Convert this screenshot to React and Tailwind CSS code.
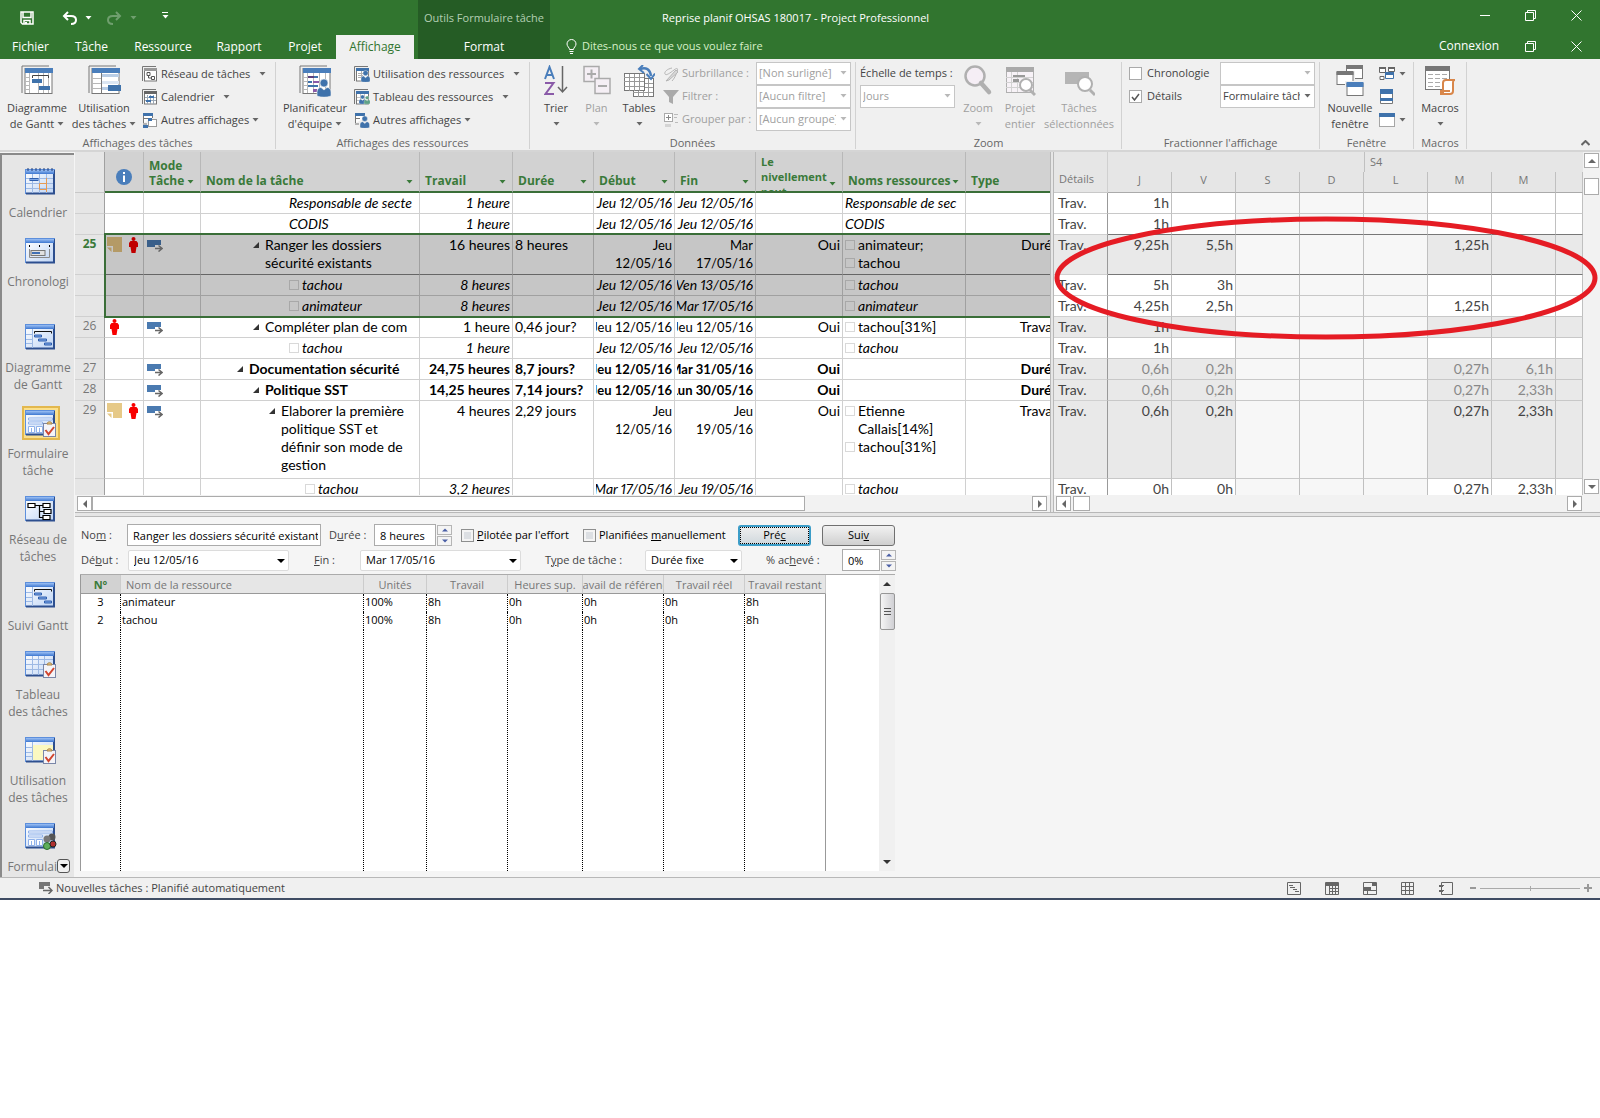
import React from 'react';

const ribbonFont = "font-['Open_Sans',sans-serif]";
const gridFont = "font-['Lato',sans-serif]";

// -------------------------
// Data
// -------------------------
const taskRows = [
  { h: 'h-[21px]', name: ['Responsable de secte'], indent: 'pl-[86px]', italic: true, work: '1 heure', start: ['Jeu 12/05/16'], end: ['Jeu 12/05/16'], res: [['Responsable de sec', false]] },
  { h: 'h-[21px]', name: ['CODIS'], indent: 'pl-[86px]', italic: true, work: '1 heure', start: ['Jeu 12/05/16'], end: ['Jeu 12/05/16'], res: [['CODIS', false]] },
  { h: 'h-[40px]', id: 25, note: true, person: true, mode: true, selected: true, name: ['Ranger les dossiers', 'sécurité existants'], indent: 'pl-[50px]', arrow: true, work: '16 heures', dur: '8 heures', start: ['Jeu', '12/05/16'], end: ['Mar', '17/05/16'], level: 'Oui', res: [['animateur;', true], ['tachou', true]], type: 'Durée' },
  { h: 'h-[21px]', selected: true, name: ['tachou'], indent: 'pl-[86px]', box: true, italic: true, work: '8 heures', start: ['Jeu 12/05/16'], end: ['Ven 13/05/16'], res: [['tachou', true]] },
  { h: 'h-[21px]', selected: true, name: ['animateur'], indent: 'pl-[86px]', box: true, italic: true, work: '8 heures', start: ['Jeu 12/05/16'], end: ['Mar 17/05/16'], res: [['animateur', true]] },
  { h: 'h-[21px]', id: 26, person: true, mode: true, name: ['Compléter plan de com'], indent: 'pl-[50px]', arrow: true, work: '1 heure', dur: '0,46 jour?', start: ['Jeu 12/05/16'], end: ['Jeu 12/05/16'], level: 'Oui', res: [['tachou[31%]', true]], type: 'Travail' },
  { h: 'h-[21px]', name: ['tachou'], indent: 'pl-[86px]', box: true, italic: true, work: '1 heure', start: ['Jeu 12/05/16'], end: ['Jeu 12/05/16'], res: [['tachou', true]] },
  { h: 'h-[21px]', id: 27, mode: true, bold: true, name: ['Documentation sécurité'], indent: 'pl-[34px]', arrow: true, work: '24,75 heures', dur: '8,7 jours?', start: ['Jeu 12/05/16'], end: ['Mar 31/05/16'], level: 'Oui', res: [], type: 'Durée' },
  { h: 'h-[21px]', id: 28, mode: true, bold: true, name: ['Politique SST'], indent: 'pl-[50px]', arrow: true, work: '14,25 heures', dur: '7,14 jours?', start: ['Jeu 12/05/16'], end: ['Lun 30/05/16'], level: 'Oui', res: [], type: 'Durée' },
  { h: 'h-[78px]', id: 29, note: true, person: true, mode: true, name: ['Elaborer la première', 'politique SST et', 'définir son mode de', 'gestion'], indent: 'pl-[66px]', arrow: true, work: '4 heures', dur: '2,29 jours', start: ['Jeu', '12/05/16'], end: ['Jeu', '19/05/16'], level: 'Oui', res: [['Etienne', true], ['Callais[14%]', 'cont'], ['tachou[31%]', true]], type: 'Travail' },
  { h: 'h-[21px]', name: ['tachou'], indent: 'pl-[102px]', box: true, italic: true, work: '3,2 heures', start: ['Mar 17/05/16'], end: ['Jeu 19/05/16'], res: [['tachou', true]] },
];

const usageRows = [
  { h: 'h-[21px]', v: ['1h', '', '', '', '', '', ''] },
  { h: 'h-[21px]', v: ['1h', '', '', '', '', '', ''], strong: true },
  { h: 'h-[40px]', v: ['9,25h', '5,5h', '', '', '', '1,25h', ''], shade: true, strong: true },
  { h: 'h-[21px]', v: ['5h', '3h', '', '', '', '', ''] },
  { h: 'h-[21px]', v: ['4,25h', '2,5h', '', '', '', '1,25h', ''] },
  { h: 'h-[21px]', v: ['1h', '', '', '', '', '', ''], shade: true },
  { h: 'h-[21px]', v: ['1h', '', '', '', '', '', ''] },
  { h: 'h-[21px]', v: ['0,6h', '0,2h', '', '', '', '0,27h', '6,1h'], shade: true, light: true },
  { h: 'h-[21px]', v: ['0,6h', '0,2h', '', '', '', '0,27h', '2,33h'], shade: true, light: true },
  { h: 'h-[78px]', v: ['0,6h', '0,2h', '', '', '', '0,27h', '2,33h'], shade: true },
  { h: 'h-[21px]', v: ['0h', '0h', '', '', '', '0,27h', '2,33h'] },
];

const views = [
  { label: ['Calendrier'], kind: 'calendar' },
  { label: ['Chronologi', '\u00a0'], kind: 'timeline' },
  { label: ['Diagramme', 'de Gantt'], kind: 'gantt' },
  { label: ['Formulaire', 'tâche'], kind: 'taskform', active: true },
  { label: ['Réseau de', 'tâches'], kind: 'network' },
  { label: ['Suivi Gantt'], kind: 'gantt' },
  { label: ['Tableau', 'des tâches'], kind: 'sheet' },
  { label: ['Utilisation', 'des tâches'], kind: 'usage' },
  { label: ['Formulaire'], kind: 'resform' },
];

const resources = [
  ['3', 'animateur', '100%', '8h', '0h', '0h', '0h', '8h'],
  ['2', 'tachou', '100%', '8h', '0h', '0h', '0h', '8h'],
];

// -------------------------
// Small drawings
// -------------------------
const Caret = ({ className = 'text-[#666]' }) => (
  <svg width="7" height="4" viewBox="0 0 7 4" className={`inline-block shrink-0 ${className}`} aria-hidden="true">
    <path d="M0.5 0h6L3.5 3.6z" fill="currentColor" />
  </svg>
);

const Tri = ({ dir, className = 'text-[#666]' }) => {
  const d = { up: 'M0 6h8L4 2z', down: 'M0 2h8L4 6z', left: 'M6 0v8L2 4z', right: 'M2 0v8l4-4z' }[dir];
  return (
    <svg width="8" height="8" viewBox="0 0 8 8" className={className} aria-hidden="true">
      <path d={d} fill="currentColor" />
    </svg>
  );
};

// stacked page outline shared by the big view buttons
const PageBack = ({ head = '#4a7ebb' }) => (
  <>
    <path d="M1 28V1h27" fill="none" stroke="#777" />
    <rect x="4" y="3.5" width="27" height="25" fill="#fff" stroke="#777" />
    <rect x="4" y="3" width="28" height="5" fill={head} />
  </>
);

const GanttBig = () => (
  <svg width="32" height="30" viewBox="0 0 32 30" aria-hidden="true">
    <PageBack />
    <path d="M8.5 8v20M17.5 8v20M22.5 8v20M27.5 8v20M4 12.5h4M4 16.5h4M4 20.5h4M4 24.5h4" stroke="#b8b8b8" />
    <path d="M11.500 13v-2.500h16V13" stroke="#444" fill="none" />
    <rect x="11" y="14" width="10" height="4" fill="#3f72ab" />
    <rect x="18" y="21" width="11" height="4" fill="#3f72ab" />
  </svg>
);

const UsageBig = () => (
  <svg width="33" height="30" viewBox="0 0 33 30" aria-hidden="true">
    <PageBack />
    <rect x="14" y="9" width="17" height="3" fill="#b9cde5" />
    <rect x="14" y="16" width="17" height="3" fill="#dbe6f3" />
    <path d="M13.500 8v20" stroke="#777" />
    <path d="M4 13.500h9M4 18.500h9M4 23.500h9" stroke="#b8b8b8" />
    <rect x="14" y="22" width="6" height="3" fill="#b9cde5" />
    <rect x="20" y="20" width="13" height="6" fill="#3f72ab" />
  </svg>
);

const Person = ({ x = 0, y = 0, s = 1, color = '#3f72ab' }) => (
  <g transform={`translate(${x} ${y}) scale(${s})`}>
    <circle cx="7" cy="4" r="4" fill={color} stroke="#f0f0f0" strokeWidth=".6" />
    <path d="M0 17v-4c0-3 2-4.500 4-4.500l3 2.500 3-2.500c2 0 4 1.500 4 4.500v4c-4 1.600-10 1.600-14 0z" fill={color} stroke="#f0f0f0" strokeWidth=".6" />
  </g>
);

const PlannerBig = () => (
  <svg width="33" height="32" viewBox="0 0 33 32" aria-hidden="true">
    <PageBack />
    <path d="M8.500 8v20M14.500 8v20M20.500 8v20M26.500 8v20M4 12.500h4M4 16.500h4M4 20.500h4M4 24.500h4" stroke="#b8b8b8" />
    <rect x="9" y="11" width="6" height="2" fill="#5b3f7d" />
    <rect x="15" y="11" width="4" height="2" fill="#3f72ab" />
    <rect x="9" y="16" width="4" height="2" fill="#3f72ab" />
    <rect x="14" y="16" width="6" height="2" fill="#8a5aa8" />
    <rect x="9" y="20" width="10" height="2" fill="#3f72ab" />
    <rect x="14" y="24" width="4" height="3" fill="#8a5aa8" />
    <Person x={18} y={14} />
  </svg>
);

const SmallView = ({ kind }) => {
  const head = kind === 'calendar' ? '#666' : kind === 'network' ? '#999' : '#3f72ab';
  if (kind === 'other' || kind === 'otherRes') {
    return (
      <svg width="16" height="16" viewBox="0 0 16 16" aria-hidden="true">
        <path d="M1.500 11V1.500h9V6" fill="#fff" stroke="#777" />
        <rect x="1" y="1" width="10" height="3" fill="#3f72ab" />
        <path d="M1 6.500h5M1 12h4" stroke="#777" />
        {kind === 'other' ? (
          <>
            <rect x="6.500" y="7.500" width="8" height="7" fill="#fff" stroke="#999" />
            <rect x="6" y="6" width="4" height="3" fill="#3f72ab" />
            <rect x="1" y="13" width="5" height="3" fill="#3f72ab" />
          </>
        ) : (
          <Person x={6} y={4} s={0.68} />
        )}
      </svg>
    );
  }
  return (
    <svg width="16" height="16" viewBox="0 0 16 16" aria-hidden="true">
      <path d="M.5 15V.5H14" fill="none" stroke="#777" />
      <rect x="2.500" y="3" width="12" height="12" fill="#fff" stroke="#777" />
      <rect x="2" y="2" width="13" height="3" fill={head} />
      {kind === 'network' && <path d="M5 6.500h3v3H5zM9.500 10.500h3v3h-3zM6.500 9.500v2.500h3" fill="none" stroke="#555" />}
      {kind === 'calendar' && (
        <>
          <path d="M3 8.500h11M3 11.500h11M5.500 6v9M8.500 6v9M11.500 6v9" stroke="#9aa7b5" />
          <rect x="7" y="7" width="5" height="2" fill="#3f72ab" />
          <rect x="4" y="11" width="5" height="2" fill="#3f72ab" />
        </>
      )}
      {kind === 'resUsage' && (
        <>
          <path d="M4 7.500h6M4 9.500h5M4 11.500h4M7.500 5v10" stroke="#b0b0b0" />
          <Person x={7} y={4.500} s={0.65} />
        </>
      )}
      {kind === 'resSheet' && (
        <>
          <path d="M3 8.500h11M3 11.500h11M6.500 5v10M10.500 5v10" stroke="#c4c4c4" />
          <Person x={5} y={6} s={0.5} />
          <Person x={10} y={7} s={0.45} color="#5fa287" />
        </>
      )}
    </svg>
  );
};

const SortIcon = () => (
  <svg width="24" height="32" viewBox="0 0 24 32" fill="none" aria-hidden="true">
    <path d="M1 14 5.500 2 10 14M2.500 10h6" stroke="#4a7ebb" strokeWidth="2" />
    <path d="M1 18h8.500L1.500 29H10" stroke="#8a5aa8" strokeWidth="2" />
    <path d="M18.500 1v26M14 22l4.500 5 4.500-5" stroke="#666" strokeWidth="1.500" />
  </svg>
);

const OutlineIcon = () => (
  <svg width="28" height="32" viewBox="0 0 28 32" fill="#f5eff5" stroke="#aaa" aria-hidden="true">
    <rect x="1" y="1.500" width="15" height="15" strokeWidth="1.500" />
    <path d="M4 9h9M8.500 4.500v9" strokeWidth="2" />
    <rect x="12" y="13.500" width="15" height="15" strokeWidth="1.500" />
    <path d="M15 21h9" strokeWidth="2" />
  </svg>
);

const TablesIcon = () => (
  <svg width="32" height="33" viewBox="0 0 32 33" aria-hidden="true">
    <rect x="10.500" y="13.500" width="20" height="18" fill="#fff" stroke="#777" />
    <path d="M10 18.500h20M10 22.500h20M10 27.500h20M15.500 14v18M20.500 14v18M25.500 14v18" stroke="#999" />
    <rect x="1.500" y="8.500" width="20" height="17" fill="#fff" stroke="#777" />
    <path d="M1 12.500h20M1 16.500h20M1 21.500h20M6.500 9v17M11.500 9v17M16.500 9v17" stroke="#999" />
    <path d="M17 4c6-2 10 0 11 7" fill="none" stroke="#4a7ebb" strokeWidth="2.500" />
    <path d="M20 0l-4 4 5 4M23.500 9l4.500 5 4-5.500" fill="none" stroke="#4a7ebb" strokeWidth="2" />
  </svg>
);

const DataIcon = ({ kind }) => (
  <svg width="16" height="16" viewBox="0 0 16 16" aria-hidden="true">
    {kind === 'mark' && (
      <>
        <path d="M9 2C4 3 1 6 2 8s5-1 9-4 4-1 3 2-3 7-5 9" fill="none" stroke="#b5b5b5" />
        <path d="M3 15 13 4l2 2L6 14z" fill="#d8d8d8" stroke="#b5b5b5" />
      </>
    )}
    {kind === 'filter' && <path d="M0 1h16l-6 7v7l-4-2V8z" fill="#aaa" />}
    {kind === 'group' && (
      <>
        <rect x="1.500" y="1.500" width="8" height="8" fill="#fff" stroke="#aaa" />
        <path d="M3 5.500h5M5.500 3v5" stroke="#888" />
        <path d="M11 2.500h4M11 5.500h3M12 10.500h3" stroke="#bbb" />
        <rect x="2" y="12" width="6" height="3" fill="#d4d4d4" />
      </>
    )}
  </svg>
);

const Lens = ({ kind }) => (
  <svg width="32" height="32" viewBox="0 0 32 32" aria-hidden="true">
    {kind === 'zoom' && (
      <>
        <circle cx="13" cy="11" r="9.500" fill="#f5eef5" stroke="#b0b0b0" strokeWidth="2.500" />
        <path d="m19 18 8 9" stroke="#b0b0b0" strokeWidth="4.500" strokeLinecap="round" />
      </>
    )}
    {kind === 'project' && (
      <>
        <rect x="2.500" y="2.500" width="27" height="25" fill="#f7f2f7" stroke="#b0b0b0" />
        <rect x="2" y="2" width="28" height="5" fill="#aaa" />
        <path d="M7.500 7v20M13.500 7v20M2 12.500h27M2 17.500h27M2 22.500h27" stroke="#d2d2d2" />
        <rect x="9" y="10" width="12" height="2" fill="#999" />
        <rect x="9" y="14" width="6" height="3" fill="#999" />
        <circle cx="22" cy="20" r="6" fill="#fff" stroke="#b0b0b0" strokeWidth="2" />
        <path d="m26 25 5 5" stroke="#b0b0b0" strokeWidth="3" />
      </>
    )}
    {kind === 'tasks' && (
      <>
        <rect x="2" y="7" width="24" height="12" fill="#b5b5b5" />
        <circle cx="22" cy="19" r="7" fill="#fff" stroke="#b0b0b0" strokeWidth="2" />
        <path d="m27 25 5 5" stroke="#b0b0b0" strokeWidth="3" />
      </>
    )}
  </svg>
);

const NewWindowIcon = () => (
  <svg width="28" height="32" viewBox="0 0 28 32" fill="#fff" aria-hidden="true">
    <rect x="10.500" y="1.500" width="16" height="12" stroke="#777" />
    <rect x="10" y="0" width="17" height="4" fill="#777" />
    <path d="M0 6h19v15H0z" fill="#f0f0f0" />
    <rect x="1" y="7.500" width="16" height="12" stroke="#777" />
    <rect x=".5" y="6" width="17" height="4" fill="#777" />
    <path d="M9 16h19v15H9z" fill="#f0f0f0" />
    <rect x="11" y="18.500" width="16" height="12" stroke="#777" />
    <rect x="10.500" y="17" width="17" height="5" fill="#4a7ebb" />
  </svg>
);

const WindowSmall = ({ kind }) => (
  <svg width="16" height="16" viewBox="0 0 16 16" fill="#fff" aria-hidden="true">
    {kind === 'switch' && (
      <>
        <path d="M.5 2.500h6v4h-6zM9.500 1.500h6v4h-6zM1 10.500h4v3H1z" stroke="#666" />
        <path d="M0 1h7v2H0zM9 1h7v2H9z" fill="#666" />
        <path d="M6.500 7.500h8v5h-8z" stroke="#3f72ab" />
        <path d="M6 6h9v3H6z" fill="#3f72ab" />
      </>
    )}
    {kind === 'arrange' && (
      <>
        <path d="M1.500 1.500h12v13h-12z" stroke="#777" />
        <path d="M1 0h13v5H1zM1 9h13v3H1z" fill="#3f72ab" />
      </>
    )}
    {kind === 'hide' && (
      <>
        <path d="M.5 4.500h15v10H.5z" stroke="#555" strokeDasharray="1 1" />
        <path d="M0 1h16v4H0z" fill="#3f72ab" />
      </>
    )}
  </svg>
);

const MacroIcon = () => (
  <svg width="32" height="32" viewBox="0 0 32 32" fill="#fff" aria-hidden="true">
    <rect x="1.500" y="2.500" width="24" height="22" stroke="#777" />
    <rect x="1" y="1" width="25" height="5" fill="#777" />
    <path d="M4 9.500h5M11 9.500h5M18 9.500h5M4 13.500h5M11 13.500h5M18 13.500h5M4 17.500h5M11 17.500h5M4 21.500h5M11 21.500h5" stroke="#aaa" />
    <path d="M19 29V18c0-2 1-3 3-3h9c-2 0-2 1-2 3v8c0 2-1 3-3 3h-9v-3h9" stroke="#d8864a" strokeWidth="2" />
  </svg>
);

const ViewIcon = ({ kind }) => (
  <svg width="32" height="28" viewBox="0 0 32 28" aria-hidden="true">
    <defs>
      <linearGradient id="viewHead" x1="0" x2="0" y1="0" y2="1">
        <stop offset="0" stopColor="#9cc0f4" />
        <stop offset="1" stopColor="#3d77d0" />
      </linearGradient>
      <linearGradient id="viewBody" x1="0" x2="1" y1="0" y2="1">
        <stop offset="0" stopColor="#fff" />
        <stop offset="1" stopColor="#bfd5f5" />
      </linearGradient>
    </defs>
    <rect x=".5" y="1.500" width="29" height="24" fill="url(#viewBody)" stroke="#5d8fdc" />
    <path d="M29 2v24M1 25.500h29" stroke="#2d4f8f" strokeWidth="2" />
    <rect x="1" y="2" width="28" height="4" fill="url(#viewHead)" />
    {kind === 'calendar' && (
      <>
        <path d="M3 0v3M7 0v3M11 0v3M15 0v3M19 0v3M23 0v3M27 0v3" stroke="#1e3d78" />
        <path d="M1 10.500h27M1 15.500h27M1 20.500h27M7.500 6v19M14.500 6v19M21.500 6v19" stroke="#9db9e4" />
        <rect x="5" y="10.500" width="8" height="2" fill="#7fa8e8" stroke="#2f5fae" />
        <path d="M21.500 10v14M14.500 15.500h7v6h-7z" stroke="#e69a52" fill="none" />
      </>
    )}
    {kind === 'timeline' && (
      <>
        <path d="M4 9h1M14 9h1M24 9h1" stroke="#000" strokeWidth="2" />
        <path d="M4.500 12v8.500h20V12" fill="none" stroke="#8a8a8a" />
        <rect x="6" y="13.500" width="14" height="5" fill="#e0e0e0" stroke="#777" />
        <rect x="7" y="15" width="8" height="2" fill="#3f6fb5" />
      </>
    )}
    {kind === 'gantt' && (
      <>
        <path d="M7.500 6v19M1 11.500h6M1 16.500h6M1 20.500h6" stroke="#9db9e4" />
        <path d="M9.500 10.500V8.500h17v2" fill="none" stroke="#111" />
        <path d="M9.500 12h7v2h-7zM13.500 16h8v2h-8zM19.500 20h7v2h-7z" fill="#7fa8e8" stroke="#2f5fae" />
      </>
    )}
    {(kind === 'taskform' || kind === 'resform') && (
      <path d="M3.500 9h24v2h-24zM3.500 13h14v2h-14zM3.500 17.500h6v6h-6zM11.500 17.500h6v6h-6zM6.500 19v5M14.500 19v5" fill="#fff" stroke="#8fb1ea" />
    )}
    {kind === 'network' && (
      <g fill="#fff" stroke="#000" strokeWidth="1.200">
        <path d="M10 10.500h8M14.500 10.500v12H18M14.500 16.500H19" fill="none" />
        <path d="M3 8.500h7v4H3zM18 8.500h7v4h-7zM19 14.500h7v4h-7zM18 20.500h7v4h-7z" />
      </g>
    )}
    {kind === 'sheet' && <path d="M1 9.500h27M1 14.500h27M1 19.500h27M7.500 6v19M13.500 6v19M19.500 6v19" stroke="#9db9e4" />}
    {kind === 'usage' && (
      <>
        <rect x="8" y="9" width="20" height="15" fill="#fbf8c0" />
        <path d="M7.500 6v19M1 11.500h6M1 16.500h6M1 20.500h6" stroke="#9db9e4" />
      </>
    )}
    {['taskform', 'sheet', 'usage'].includes(kind) && (
      <>
        <rect x="18.500" y="14.500" width="12" height="13" fill="#f4f4f8" stroke="#7a86a8" />
        <path d="M22 15c0-3 5-3 5 0z" fill="#e7c27a" stroke="#a8844a" />
        <path d="m20.500 21 3 4 5.500-7" fill="none" stroke="#d0452f" strokeWidth="2" />
      </>
    )}
    {kind === 'resform' && (
      <>
        <circle cx="27" cy="15" r="3.500" fill="#555" />
        <circle cx="22" cy="17" r="3.500" fill="#777" />
        <circle cx="22" cy="24" r="3.500" fill="#5fae5a" stroke="#2c6b2a" />
        <circle cx="28" cy="22" r="3" fill="#b03030" stroke="#222" />
      </>
    )}
  </svg>
);

const NoteIcon = ({ dark }) => (
  <svg width="15" height="15" viewBox="0 0 15 15" className={dark ? 'text-[#b49a66]' : 'text-[#e6c987]'} aria-hidden="true">
    <path d="M0 0h15v15H6V9H0z" fill="currentColor" />
    <path d="M0 10.500h4.500V15z" fill="currentColor" />
  </svg>
);

const RedMan = ({ dark }) => (
  <svg width="9" height="16" viewBox="0 0 9 16" className={dark ? 'text-[#c00000]' : 'text-[#f80000]'} aria-hidden="true">
    <circle cx="4.500" cy="2" r="2" fill="currentColor" />
    <path d="M1.500 4h6L9 6v4H7.500l-1 6h-4l-1-6H0V6z" fill="currentColor" />
  </svg>
);

const ModeIcon = ({ dark }) => (
  <svg width="16" height="12" viewBox="0 0 16 12" className={dark ? 'text-[#3a5f8a]' : 'text-[#4a7ab0]'} aria-hidden="true">
    <path d="M0 0h14v5H8v2H0z" fill="currentColor" />
    <path d="M8 8.500h7M11.500 5.500l3.500 3-3.500 3" fill="none" stroke="#666" strokeWidth="1.500" />
  </svg>
);

const Box = () => <span className="mr-[3px] inline-block h-[10px] w-[10px] shrink-0 border border-black/15" />;

// -------------------------
// Title bar and tabs
// -------------------------
const RestoreGlyph = () => (
  <svg width="11" height="11" viewBox="0 0 11 11" fill="none" stroke="#fff" aria-hidden="true">
    <path d="M.5 2.500h8v8h-8zM2.500 2.500v-2h8v8h-2" />
  </svg>
);

const CloseGlyph = () => (
  <svg width="11" height="11" viewBox="0 0 11 11" stroke="#fff" aria-hidden="true">
    <path d="m.5.5 10 10m0-10-10 10" />
  </svg>
);

const TitleBar = () => (
  <header className="flex h-[59px] bg-[#31752f] text-[12px] text-white">
    <div className="flex w-[418px] shrink-0 flex-col">
      <div className="flex h-[35px] items-center pl-[20px]">
        <button aria-label="Enregistrer">
          <svg width="14" height="14" viewBox="0 0 14 14" fill="none" stroke="#fff" strokeWidth="1.500" aria-hidden="true">
            <path d="M1 1h12v12H2.500L1 11.500zM3 1v5.500h8V1M4 13V9.500h6V13" />
            <path d="M5 11h2v2H5z" fill="#fff" stroke="none" />
          </svg>
        </button>
        <button aria-label="Annuler" className="ml-[28px] flex items-center gap-[8px]">
          <svg width="15" height="14" viewBox="0 0 15 14" fill="none" stroke="#fff" strokeWidth="2" aria-hidden="true">
            <path d="M2 5h7c3 0 5 1.500 5 4s-2 4-5 4M6 1 2 5l4 4" />
          </svg>
          <Caret className="text-white" />
        </button>
        <button aria-label="Rétablir" className="ml-[15px] flex items-center gap-[8px] opacity-30" disabled>
          <svg width="15" height="14" viewBox="0 0 15 14" fill="none" stroke="#fff" strokeWidth="2" aria-hidden="true">
            <path d="M13 5H6C3 5 1 6.500 1 9s2 4 5 4M9 1l4 4-4 4" />
          </svg>
          <Caret className="text-white" />
        </button>
        <button aria-label="Personnaliser" className="ml-[25px] flex w-[7px] flex-col gap-[2px] pb-[4px]">
          <span className="h-px w-[6px] bg-white" />
          <Caret className="text-white" />
        </button>
      </div>
      <nav className="flex h-[24px] text-center leading-[22px]">
        <button className="w-[61px]">Fichier</button>
        <button className="w-[61px]">Tâche</button>
        <button className="w-[82px]">Ressource</button>
        <button className="w-[70px]">Rapport</button>
        <button className="w-[62px]">Projet</button>
        <button className="w-[78px] bg-[#f0f0f0] text-[#31752f]">Affichage</button>
      </nav>
    </div>
    <div className="flex w-[132px] shrink-0 flex-col bg-[#255c25] text-center">
      <div className="h-[35px] text-[11px] leading-[35px] text-[#b4cfb3]">Outils Formulaire tâche</div>
      <button className="h-[24px] leading-[22px]">Format</button>
    </div>
    <div className="flex min-w-0 flex-1 flex-col">
      <div className="flex h-[35px] items-center pr-[18px]">
        <div className="ml-[112px] flex-1 text-[11px] leading-[35px]">Reprise planif OHSAS 180017 - Project Professionnel</div>
        <div className="flex items-center gap-[35px] pb-[5px]">
          <button aria-label="Réduire" className="h-px w-[10px] bg-white" />
          <button aria-label="Restaurer"><RestoreGlyph /></button>
          <button aria-label="Fermer"><CloseGlyph /></button>
        </div>
      </div>
      <div className="flex h-[24px] items-center pr-[18px] pb-[2px] pl-[16px]">
        <svg width="11" height="15" viewBox="0 0 11 15" fill="none" stroke="#fff" aria-hidden="true">
          <path d="M3.500 10.500C3.500 8.500 1 7.500 1 5a4.500 4.500 0 0 1 9 0c0 2.500-2.500 3.500-2.500 5.500zM3.500 12.500h4M4 14.500h3" />
        </svg>
        <button className="ml-[5px] text-[11px] text-[#d7f0c8]">Dites-nous ce que vous voulez faire</button>
        <div className="flex-1" />
        <a href="#connexion">Connexion</a>
        <button aria-label="Restaurer le projet" className="ml-[26px]"><RestoreGlyph /></button>
        <button aria-label="Fermer le projet" className="ml-[35px]"><CloseGlyph /></button>
      </div>
    </div>
  </header>
);

// -------------------------
// Ribbon
// -------------------------
const Group = ({ label, width, children }) => (
  <section className={`flex shrink-0 flex-col ${width}`}>
    <div className="mt-[3px] flex h-[87px] flex-col border-r border-[#d2d2d2]">
      <div className="flex h-[73px] shrink-0">{children}</div>
      <div className="text-center text-[11px] leading-[15px] text-[#666]">{label}</div>
    </div>
  </section>
);

const BigButton = ({ icon, lines, width, caret, disabled }) => (
  <button disabled={disabled} className={`flex shrink-0 flex-col items-center ${width} ${disabled ? 'text-[#a0a0a0]' : 'text-[#444]'}`}>
    <span className="flex h-[38px] items-start pt-[3px]">{icon}</span>
    {lines.map((line, i) => (
      <span key={line} className="flex items-center gap-[3px] leading-[16px] whitespace-nowrap">
        {line}
        {caret && lines.length > 1 && i === 1 && <Caret />}
      </span>
    ))}
    {caret && lines.length === 1 && <Caret className={disabled ? 'mt-[6px] text-[#b8b8b8]' : 'mt-[6px] text-[#666]'} />}
  </button>
);

const SmallButton = ({ kind, label, gap = 'gap-[9px]' }) => (
  <button className={`flex h-[23px] items-center whitespace-nowrap text-[#444] ${gap}`}>
    <span className="flex items-center gap-[3px]">
      <SmallView kind={kind} />
      <span className="pt-px">{label}</span>
    </span>
    <Caret />
  </button>
);

const Combo = ({ id, label, value, disabled }) => (
  <span className="relative block h-[23px] w-[95px]">
    <select
      id={id}
      aria-label={label}
      disabled={disabled}
      className={`h-[23px] w-full appearance-none truncate border border-[#c6c6c6] bg-white pr-[14px] pl-[2px] text-clip opacity-100 ${disabled ? 'text-[#a0a0a0]' : 'text-[#444]'}`}
    >
      <option>{value}</option>
    </select>
    <Caret className={disabled ? 'pointer-events-none absolute top-[9px] right-[4px] text-[#b8b8b8]' : 'pointer-events-none absolute top-[9px] right-[4px] text-[#666]'} />
  </span>
);

const RibbonCheck = ({ label, checked }) => (
  <label className="flex h-[23px] items-center gap-[5px]">
    <input
      type="checkbox"
      defaultChecked={checked}
      className="peer h-[13px] w-[13px] appearance-none border border-[#aaa] bg-white"
    />
    <svg width="9" height="8" viewBox="0 0 9 8" className="pointer-events-none -ml-[16px] mr-[2px] hidden shrink-0 peer-checked:block" aria-hidden="true">
      <path d="m1 4 2.500 3L8 1" fill="none" stroke="#555" strokeWidth="1.500" />
    </svg>
    {label}
  </label>
);

const Ribbon = () => (
  <div className="flex h-[93px] border-b-2 border-[#d5d5d5] bg-[#f0f0f0] text-[11px] text-[#444]">
    <Group label="Affichages des tâches" width="w-[276px]">
      <BigButton icon={<GanttBig />} lines={['Diagramme', 'de Gantt']} width="ml-[2px] w-[70px]" caret />
      <BigButton icon={<UsageBig />} lines={['Utilisation', 'des tâches']} width="w-[64px]" caret />
      <div className="flex flex-col items-start pl-[6px]">
        <SmallButton kind="network" label="Réseau de tâches" />
        <SmallButton kind="calendar" label="Calendrier" />
        <SmallButton kind="other" label="Autres affichages" gap="gap-[3px]" />
      </div>
    </Group>
    <Group label="Affichages des ressources" width="w-[254px]">
      <BigButton icon={<PlannerBig />} lines={['Planificateur', "d'équipe"]} width="ml-[4px] w-[70px]" caret />
      <div className="flex flex-col items-start pl-[4px]">
        <SmallButton kind="resUsage" label="Utilisation des ressources" />
        <SmallButton kind="resSheet" label="Tableau des ressources" />
        <SmallButton kind="otherRes" label="Autres affichages" gap="gap-[3px]" />
      </div>
    </Group>
    <Group label="Données" width="w-[326px]">
      <BigButton icon={<SortIcon />} lines={['Trier']} width="ml-[4px] w-[44px]" caret />
      <BigButton icon={<OutlineIcon />} lines={['Plan']} width="w-[37px]" caret disabled />
      <BigButton icon={<TablesIcon />} lines={['Tables']} width="w-[48px]" caret />
      <div className="w-[93px] text-[#a0a0a0]">
        {[['mark', 'Surbrillance :', 'hl'], ['filter', 'Filtrer :', 'flt'], ['group', 'Grouper par :', 'grp']].map(([kind, text, id]) => (
          <label key={id} htmlFor={id} className="flex h-[23px] items-center gap-[3px] whitespace-nowrap">
            <DataIcon kind={kind} />
            {text}
          </label>
        ))}
      </div>
      <div>
        <Combo id="hl" value="[Non surligné]" disabled />
        <Combo id="flt" value="[Aucun filtre]" disabled />
        <Combo id="grp" value="[Aucun groupe]" disabled />
      </div>
    </Group>
    <Group label="Zoom" width="w-[266px]">
      <div className="ml-[4px] w-[95px]">
        <label htmlFor="scale" className="flex h-[23px] items-center whitespace-nowrap">Échelle de temps :</label>
        <Combo id="scale" value="Jours" disabled />
      </div>
      <BigButton icon={<Lens kind="zoom" />} lines={['Zoom']} width="ml-[1px] w-[44px]" caret disabled />
      <BigButton icon={<Lens kind="project" />} lines={['Projet', 'entier']} width="w-[40px]" disabled />
      <BigButton icon={<Lens kind="tasks" />} lines={['Tâches', 'sélectionnées']} width="w-[78px]" disabled />
    </Group>
    <Group label="Fractionner l'affichage" width="w-[198px]">
      <div className="w-[98px] pl-[7px]">
        <RibbonCheck label="Chronologie" />
        <RibbonCheck label="Détails" checked />
      </div>
      <div>
        <Combo label="Vue chronologie" value="" disabled />
        <Combo label="Vue détails" value="Formulaire tâche" />
      </div>
    </Group>
    <Group label="Fenêtre" width="w-[94px]">
      <BigButton icon={<NewWindowIcon />} lines={['Nouvelle', 'fenêtre']} width="ml-[3px] w-[54px]" />
      <div className="flex flex-col items-start pl-[2px]">
        <button aria-label="Changer de fenêtre" className="flex h-[23px] items-center gap-[4px]"><WindowSmall kind="switch" /><Caret /></button>
        <button aria-label="Réorganiser" className="flex h-[23px] items-center"><WindowSmall kind="arrange" /></button>
        <button aria-label="Masquer" className="flex h-[23px] items-center gap-[4px]"><WindowSmall kind="hide" /><Caret /></button>
      </div>
    </Group>
    <Group label="Macros" width="w-[53px]">
      <BigButton icon={<MacroIcon />} lines={['Macros']} width="w-[52px]" caret />
    </Group>
    <div className="flex flex-1 items-end justify-end pr-[10px] pb-[4px]">
      <button aria-label="Réduire le ruban">
        <svg width="9" height="6" viewBox="0 0 9 6" fill="none" stroke="#666" strokeWidth="2" aria-hidden="true">
          <path d="m.5 5 4-4 4 4" />
        </svg>
      </button>
    </div>
  </div>
);

// -------------------------
// View bar
// -------------------------
const ViewBar = () => (
  <aside className="relative mt-px flex w-[74px] shrink-0 flex-col items-center overflow-hidden border-t-2 border-l-2 border-[#8a8a8a] bg-[#e6e6e6] pt-[10px] text-[12px] text-[#777]">
    {views.map((v, i) => (
      <button key={i} className={`flex w-full flex-col items-center leading-[17px] ${i < views.length - 1 ? 'pb-[13px]' : ''}`}>
        <span className={`mb-[5px] ml-[5px] flex h-[34px] w-[38px] items-center justify-center ${v.active ? 'border-2 border-[#e3b84e] bg-[#fbe08c]' : ''}`}>
          <ViewIcon kind={v.kind} />
        </span>
        {v.label.map((l) => (
          <span key={l} className="whitespace-nowrap">{l}</span>
        ))}
      </button>
    ))}
    <button aria-label="Vues suivantes" className="absolute right-[4px] bottom-[4px] flex h-[14px] w-[13px] items-center justify-center rounded-[3px] border border-[#555] bg-[#f0f0f0]">
      <Tri dir="down" className="text-black" />
    </button>
  </aside>
);

// -------------------------
// Task sheet
// -------------------------
const HeadCell = ({ lines, arrow = true }) => (
  <th className="overflow-hidden border-r border-b-2 border-r-[#b8b8b8] border-b-[#3a6e38] bg-[#d2d2d2] p-0 text-left align-bottom font-bold text-[#3a7a3a]">
    <div className="flex h-[39px] items-end justify-between overflow-hidden pr-[6px] pb-[3px] pl-[5px]">
      <span className="leading-[15px] whitespace-nowrap">
        {lines.map((l) => <span key={l} className="block">{l}</span>)}
      </span>
      {arrow && <Caret className="mb-[4px] text-[#3a7a3a]" />}
    </div>
  </th>
);

const RightCell = ({ lines = [], className }) => (
  <td className={className}>
    {lines.map((l) => (
      <div key={l} className="flex justify-end overflow-hidden">
        <span className="shrink-0">{l}</span>
      </div>
    ))}
  </td>
);

const TaskRow = ({ row, rule }) => {
  const line = rule ? 'border-b-[#666]' : row.selected ? 'border-b-[#a0a0a0]' : 'border-b-[#d0d0d0]';
  const cell = `border-r border-b px-[2px] pt-px pb-0 align-top ${line} ${row.selected ? 'border-r-[#a0a0a0] bg-[#c6c6c6]' : 'border-r-[#d0d0d0] bg-white'}`;
  // upright digits run wider than the slanted ones
  const dateCell = `${cell} ${row.italic ? 'proportional-nums' : 'text-[13px]'}`;
  return (
    <tr className={`${row.h} ${row.bold ? 'font-bold' : ''} ${row.italic ? 'italic' : ''}`}>
      <td className={`border-r border-b border-r-[#a0a0a0] border-b-[#d0d0d0] bg-[#e6e6e6] p-0 text-center align-top text-[12px] leading-[17px] not-italic ${ribbonFont} ${row.selected ? 'font-bold text-[#3a7a3a]' : 'font-normal text-[#777]'}`}>
        {row.id}
      </td>
      <td className={cell}>
        <div className="flex h-[17px] items-start gap-[7px] pt-px">
          {row.note && <NoteIcon dark={row.selected} />}
          {row.person && (
            <span className={row.note ? '' : 'pl-[3px]'}><RedMan dark={row.selected} /></span>
          )}
        </div>
      </td>
      <td className={cell}>
        {row.mode && <div className="pt-[4px] pl-px"><ModeIcon dark={row.selected} /></div>}
      </td>
      <td className={cell}>
        <div className={`flex overflow-hidden ${row.indent}`}>
          {row.arrow && (
            <svg width="6" height="6" viewBox="0 0 6 6" className="mt-[6px] mr-[6px] shrink-0" aria-hidden="true">
              <path d="M6 0v6H0z" fill="#333" />
            </svg>
          )}
          {row.box && <span className="flex h-[18px] items-center"><Box /></span>}
          <div>
            {row.name.map((l) => <div key={l} className="whitespace-nowrap">{l}</div>)}
          </div>
        </div>
      </td>
      <RightCell className={cell} lines={[row.work]} />
      <td className={`${cell} whitespace-nowrap`}>{row.dur}</td>
      <RightCell className={dateCell} lines={row.start} />
      <RightCell className={dateCell} lines={row.end} />
      <RightCell className={cell} lines={row.level ? [row.level] : []} />
      <td className={cell}>
        {row.res.map(([text, flag]) => (
          <div key={text} className="flex items-center overflow-hidden whitespace-nowrap">
            {flag === true && <Box />}
            {flag === 'cont' && <span className="w-[13px]" />}
            {text}
          </div>
        ))}
      </td>
      <RightCell className={cell} lines={row.type ? [row.type] : []} />
    </tr>
  );
};

const TaskSheet = () => (
  <div className="relative h-[343px] overflow-hidden">
    <table className={`w-[987px] table-fixed border-separate border-spacing-0 text-[14px] leading-[18px] text-black ${gridFont}`}>
      <colgroup>
        <col className="w-[30px]" />
        <col className="w-[39px]" />
        <col className="w-[57px]" />
        <col className="w-[219px]" />
        <col className="w-[93px]" />
        <col className="w-[81px]" />
        <col className="w-[81px]" />
        <col className="w-[81px]" />
        <col className="w-[87px]" />
        <col className="w-[123px]" />
        <col className="w-[96px]" />
      </colgroup>
      <thead className={`text-[12px] ${ribbonFont}`}>
        <tr className="h-[41px]">
          <th className="border-r border-b border-r-[#a0a0a0] border-b-[#c8c8c8] bg-[#e6e6e6]" />
          <th className="border-r border-b-2 border-r-[#b8b8b8] border-b-[#3a6e38] bg-[#d2d2d2] p-0">
            <svg width="16" height="16" viewBox="0 0 16 16" className="mx-auto mt-[10px]" aria-hidden="true">
              <circle cx="8" cy="8" r="8" fill="#4a7ebb" />
              <path d="M7 6.500h2V13H7zM7 3h2v2H7z" fill="#fff" />
            </svg>
          </th>
          <HeadCell lines={['Mode', 'Tâche']} />
          <HeadCell lines={['Nom de la tâche']} />
          <HeadCell lines={['Travail']} />
          <HeadCell lines={['Durée']} />
          <HeadCell lines={['Début']} />
          <HeadCell lines={['Fin']} />
          <th className="overflow-hidden border-r border-b-2 border-r-[#b8b8b8] border-b-[#3a6e38] bg-[#d2d2d2] p-0 text-left text-[11px] font-bold text-[#3a7a3a]">
            <div className="flex h-[39px] items-start justify-between overflow-hidden pt-[2px] pr-[6px] pl-[5px] leading-[15px]">
              <span className="w-[68px] overflow-hidden">Le nivellement peut</span>
              <Caret className="mt-[28px] text-[#3a7a3a]" />
            </div>
          </th>
          <HeadCell lines={['Noms ressources']} />
          <HeadCell lines={['Type']} arrow={false} />
        </tr>
      </thead>
      <tbody>
        {taskRows.map((row, i) => <TaskRow key={i} row={row} rule={i === 2} />)}
      </tbody>
    </table>
    {/* selection frame around the active task */}
    <div className="pointer-events-none absolute top-[81px] -right-[4px] left-[29px] h-[85px] border-2 border-[#3a6e38]" />
  </div>
);

// -------------------------
// Usage grid on the right
// -------------------------
const weekend = [2, 3, 4];

const UsageGrid = () => (
  <div className="h-[343px] min-w-0 flex-1 overflow-hidden">
    <table className={`w-full table-fixed border-separate border-spacing-0 text-[14px] leading-[18px] text-[#444] ${gridFont}`}>
      <colgroup>
        <col className="w-[54px]" />
        <col className="w-[64px]" />
        <col className="w-[64px]" />
        <col className="w-[64px]" />
        <col className="w-[64px]" />
        <col className="w-[64px]" />
        <col className="w-[64px]" />
        <col className="w-[64px]" />
        <col />
      </colgroup>
      <thead className={`bg-[#e6e6e6] text-[11px] text-[#777] ${ribbonFont}`}>
        <tr className="h-[20px]">
          <th rowSpan={2} className="border-r border-b border-r-[#d0d0d0] border-b-[#c8c8c8] p-0 pt-[14px] pl-[5px] text-left font-normal">Détails</th>
          <th colSpan={4} className="p-0" />
          <th colSpan={4} className="border-l border-[#c0c0c0] p-0 pl-[5px] text-left font-normal">S4</th>
        </tr>
        <tr className="h-[21px]">
          {['J', 'V', 'S', 'D', 'L', 'M', 'M', ''].map((d, i) => (
            <th key={i} className="border-r border-b border-r-[#c0c0c0] border-b-[#aaa] p-0 pb-[4px] leading-[16px] font-normal">{d}</th>
          ))}
        </tr>
      </thead>
      <tbody>
        {usageRows.map((row, r) => {
          const line = row.strong ? 'border-b-[#777]' : 'border-b-[#c8c8c8]';
          return (
            <tr key={r} className={row.h}>
              <td className={`border-r border-b border-r-[#999] border-b-[#d0d0d0] p-0 pt-px pl-[4px] align-top ${row.shade ? 'bg-[#e9e9e9]' : 'bg-white'}`}>Trav.</td>
              {[...row.v, ''].map((v, c) => (
                <td
                  key={c}
                  className={`border-r border-b border-r-[#c0c0c0] p-0 pt-px pr-[2px] text-right align-top ${line} ${weekend.includes(c) ? 'bg-[#f7f7f7]' : row.shade ? 'bg-[#e9e9e9]' : 'bg-white'} ${row.light ? 'text-[#888]' : ''}`}
                >
                  {v}
                </td>
              ))}
            </tr>
          );
        })}
      </tbody>
    </table>
  </div>
);

const ScrollButton = ({ dir }) => (
  <button aria-label={`Défiler ${dir}`} className="flex h-[15px] w-[15px] shrink-0 items-center justify-center border border-[#ababab] bg-white">
    <Tri dir={dir} />
  </button>
);

const Panes = () => (
  <div className="flex">
    <div className="w-[975px] shrink-0">
      <TaskSheet />
      <div className="flex h-[17px] items-center bg-[#f2f2f2] pr-[3px] pl-[2px]">
        <ScrollButton dir="left" />
        <div className="h-[15px] w-[713px] border border-[#ababab] bg-white" />
        <div className="flex-1" />
        <ScrollButton dir="right" />
      </div>
    </div>
    <div className="w-[4px] shrink-0 border-x border-[#b8b8b8] bg-[#e6e6e6]" />
    <div className="relative min-w-0 flex-1">
      <div className="flex">
        <UsageGrid />
        <div className="flex w-[17px] shrink-0 flex-col items-center bg-[#f2f2f2] py-px">
          <ScrollButton dir="up" />
          <div className="mt-[10px] h-[17px] w-[15px] border border-[#ababab] bg-white" />
          <div className="flex-1" />
          <ScrollButton dir="down" />
        </div>
      </div>
      <div className="flex h-[17px] items-center bg-[#f2f2f2] pr-[18px] pl-[2px]">
        <ScrollButton dir="left" />
        <div className="ml-[2px] h-[15px] w-[17px] border border-[#ababab] bg-white" />
        <div className="flex-1" />
        <ScrollButton dir="right" />
      </div>
      <svg viewBox="0 0 548 124" preserveAspectRatio="none" className="pointer-events-none absolute top-[64px] -left-[2px] h-[124px] w-[calc(100%+2px)]" aria-hidden="true">
        <ellipse cx="274" cy="62" rx="269" ry="59" fill="none" stroke="#e51c24" strokeWidth="5" />
      </svg>
    </div>
  </div>
);

// -------------------------
// Task form
// -------------------------
const Spinner = () => (
  <span className="flex w-[15px] flex-col gap-px">
    {['up', 'down'].map((d) => (
      <button key={d} type="button" aria-label={d === 'up' ? 'Augmenter' : 'Diminuer'} className="flex h-[10px] items-center justify-center border border-[#b5b5b5] bg-[#f4f4f4]">
        <Tri dir={d} className="h-[6px] w-[6px] text-[#4a5fa5]" />
      </button>
    ))}
  </span>
);

const FormSelect = ({ id, value, width }) => (
  <span className={`relative block ${width}`}>
    <select id={id} className="h-[21px] w-full appearance-none rounded-[2px] border border-[#dcdcdc] bg-white pl-[5px] text-black">
      <option>{value}</option>
    </select>
    <Tri dir="down" className="pointer-events-none absolute top-[7px] right-[4px] text-black" />
  </span>
);

const FormCheck = ({ children, className }) => (
  <label className={`flex items-center gap-[3px] whitespace-nowrap text-black ${className}`}>
    <input type="checkbox" className="h-[13px] w-[13px] appearance-none border border-[#8e8f8f] bg-[#dcdfe3] shadow-[inset_0_0_0_2px_#f4f4f4]" />
    <span>{children}</span>
  </label>
);

const resHead = ['N°', 'Nom de la ressource', 'Unités', 'Travail', 'Heures sup.', 'Travail de référence', 'Travail réel', 'Travail restant'];

const TaskForm = () => (
  <form className="flex flex-1 flex-col bg-[#f5f5f5] pt-[7px] pl-[5px] text-[11px] text-[#444]">
    <div className="flex h-[22px] items-center">
      <label htmlFor="nom" className="w-[47px] pl-px">No<u>m</u> :</label>
      <input id="nom" defaultValue="Ranger les dossiers sécurité existants" className="h-[22px] w-[194px] border border-[#ababab] bg-white pr-[2px] pl-[5px] text-black" />
      <label htmlFor="duree" className="w-[53px] pl-[8px]">D<u>u</u>rée :</label>
      <input id="duree" defaultValue="8 heures" className="mr-px h-[22px] w-[62px] border border-[#ababab] bg-white pl-[5px] text-black" />
      <Spinner />
      <FormCheck className="ml-[9px] w-[122px]"><u>P</u>ilotée par l'effort</FormCheck>
      <FormCheck className="w-[155px]">Planifiées <u>m</u>anuellement</FormCheck>
      <button type="button" className="mr-[11px] h-[21px] w-[73px] rounded-[3px] border-2 border-[#3c9dc8] bg-[linear-gradient(#eee,#d0d8dd)] text-black outline-1 -outline-offset-3 outline-dotted outline-black">Pré<u>c</u></button>
      <button type="button" className="h-[21px] w-[73px] rounded-[3px] border border-[#707070] bg-[linear-gradient(#f2f2f2,#cfcfcf)] text-black">Sui<u>v</u></button>
    </div>
    <div className="mt-[3px] flex h-[22px] items-center">
      <label htmlFor="debut" className="w-[48px] pl-px">Dé<u>b</u>ut :</label>
      <FormSelect id="debut" value="Jeu 12/05/16" width="w-[161px]" />
      <label htmlFor="fin" className="w-[71px] pl-[25px]"><u>F</u>in :</label>
      <FormSelect id="fin" value="Mar 17/05/16" width="w-[161px]" />
      <label htmlFor="type" className="w-[124px] pl-[24px]">T<u>y</u>pe de tâche :</label>
      <FormSelect id="type" value="Durée fixe" width="w-[97px]" />
      <label htmlFor="pct" className="w-[100px] pl-[24px]">% ac<u>h</u>evé :</label>
      <input id="pct" defaultValue="0%" className="mr-px h-[22px] w-[38px] border border-[#ababab] bg-white pl-[5px] text-black" />
      <Spinner />
    </div>
    <div className="mt-[3px] mb-[6px] flex h-[297px] w-[815px] border-t border-[#ababab] bg-white">
      <table className="h-full w-[746px] table-fixed border-separate border-spacing-0 border-l border-l-[#999] text-black">
        <colgroup>
          <col className="w-[40px]" />
          <col className="w-[243px]" />
          <col className="w-[63px]" />
          <col className="w-[81px]" />
          <col className="w-[75px]" />
          <col className="w-[81px]" />
          <col className="w-[81px]" />
          <col className="w-[81px]" />
        </colgroup>
        <thead>
          <tr className="h-[19px]">
            {resHead.map((h, i) => (
              <th
                key={h}
                className={`overflow-hidden border-r border-b border-r-[#ccc] border-b-[#999] p-0 pt-[2px] leading-[16px] whitespace-nowrap ${i === 0 ? 'bg-[#d2d2d2] font-bold text-[#3a7a3a]' : 'bg-[#e6e6e6] font-normal text-[#777]'} ${i === 1 ? 'pl-[5px] text-left' : ''}`}
              >
                <span className={`flex overflow-hidden ${i === 1 ? '' : 'justify-center'}`}><span className="shrink-0">{h}</span></span>
              </th>
            ))}
          </tr>
        </thead>
        <tbody>
          {[...resources, Array(8).fill('')].map((row, r) => (
            <tr key={r} className={r < 2 ? 'h-[18px]' : ''}>
              {row.map((v, c) => (
                <td key={c} className={`p-0 leading-[15px] align-top ${c === 0 ? 'text-center' : 'pl-px'} ${c === 7 ? 'border-r border-[#999]' : 'border-r border-dotted border-black'}`}>{v}</td>
              ))}
            </tr>
          ))}
        </tbody>
      </table>
      <div className="flex-1" />
      <div className="flex w-[16px] flex-col items-center bg-[#f0f0f0] py-[5px]">
        <Tri dir="up" className="text-[#333]" />
        <div className="mt-[5px] flex h-[37px] w-[15px] flex-col items-center justify-center gap-[2px] rounded-[2px] border border-[#979797] bg-[linear-gradient(90deg,#f5f5f5,#d0d0d4)]">
          <span className="h-px w-[7px] bg-[#555]" />
          <span className="h-px w-[7px] bg-[#555]" />
          <span className="h-px w-[7px] bg-[#555]" />
        </div>
        <div className="flex-1" />
        <Tri dir="down" className="text-[#333]" />
      </div>
    </div>
  </form>
);

// -------------------------
// Status bar
// -------------------------
const statusIcons = [
  ['Gantt', <path key="g" d="M.5.5h13v12H.5zM2 3.500h4M3 5.500h5M6 7.500h4M8 9.500h4" />],
  ['Utilisation', <path key="u" d="M.5.5h13v12H.5zM1 1.500h12M1 2.500h12M1 3.500h12M4.500 4v8M7.500 4v8M10.500 4v8M5 6.500h8M5 9.500h8" />],
  ['Planificateur', <path key="p" d="M.5.5h13v12H.5zM1 5.500h7M1 6.500h7M1 7.500h7M9 1.500h4M9 2.500h4M9 3.500h4M1 8.500h12M4.500 9v3" />],
  ['Tableau', <path key="t" d="M.5.5h12v12H.5zM4.500 1v11M8.500 1v11M1 4.500h11M1 8.500h11" />],
  ['Rapport', <path key="r" d="M2.500.5h11v12h-11zM0 3.500h5M0 4.500h4M0 8.500h5M0 9.500h4" />],
];

const StatusBar = () => (
  <footer className="flex h-[23px] items-center border-t border-b-2 border-t-[#b8b8b8] border-b-[#3f4c63] bg-[#f0f0f0] pr-[8px] pl-[39px] text-[11px] text-[#444]">
    <svg width="14" height="12" viewBox="0 0 14 12" aria-hidden="true">
      <path d="M0 0h11v4H5v3H0z" fill="#777" />
      <path d="M4 8.500h9M9.500 5l3.500 3.500L9.500 12" fill="none" stroke="#666" strokeWidth="1.500" />
    </svg>
    <span className="ml-[3px]">Nouvelles tâches : Planifié automatiquement</span>
    <div className="flex-1" />
    <div className="flex items-center gap-[24px]">
      {statusIcons.map(([label, shape]) => (
        <button key={label} aria-label={label}>
          <svg width="14" height="13" viewBox="0 0 14 13" fill="none" stroke="#666" aria-hidden="true">{shape}</svg>
        </button>
      ))}
    </div>
    <button aria-label="Zoom arrière" className="ml-[17px] h-[2px] w-[6px] bg-[#999]" />
    <svg width="100" height="7" viewBox="0 0 100 7" className="mx-[4px]" stroke="#aaa" aria-hidden="true">
      <path d="M0 3.500h100M50.500 1v5" />
    </svg>
    <button aria-label="Zoom avant">
      <svg width="8" height="8" viewBox="0 0 8 8" stroke="#999" strokeWidth="2" aria-hidden="true"><path d="M0 4h8M4 0v8" /></svg>
    </button>
  </footer>
);

export default function App() {
  return (
    <div className={`min-h-screen bg-white ${ribbonFont}`}>
      <TitleBar />
      <Ribbon />
      <main className="flex bg-[#f5f5f5]">
        <div className="relative w-[75px] shrink-0 overflow-hidden">
          <div className="absolute inset-0 flex"><ViewBar /></div>
        </div>
        <div className="flex min-w-0 flex-1 flex-col">
          <Panes />
          <div className="h-[5px] border-y border-[#b8b8b8] bg-[#e6e6e6]" />
          <TaskForm />
        </div>
      </main>
      <StatusBar />
    </div>
  );
}
